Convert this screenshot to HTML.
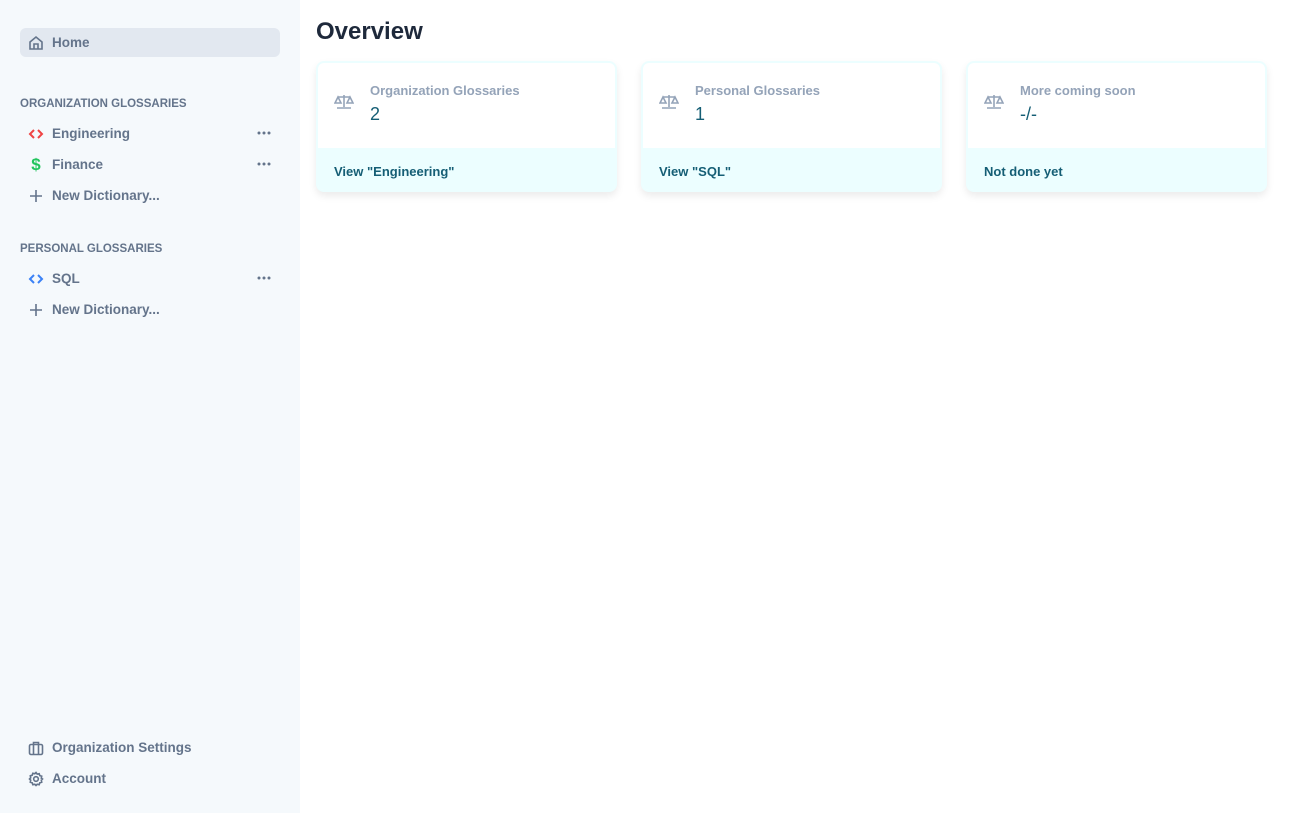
<!DOCTYPE html>
<html><head><meta charset="utf-8"><style>
*{box-sizing:border-box;margin:0;padding:0}
body{width:1312px;height:813px;font-family:"Liberation Sans",sans-serif;background:#fff;position:relative;overflow:hidden}
.side{position:absolute;left:0;top:0;width:300px;height:813px;background:#f5f9fc}
.item{position:absolute;left:20px;width:260px;height:29px;display:flex;align-items:center;padding-left:8px;font-size:13.5px;color:#64748b;font-weight:bold}
.item svg{width:16px;height:16px;margin-right:8px}
.home{background:#e2e8f0;border-radius:6px}
.sec{position:absolute;left:20px;font-size:11.5px;font-weight:bold;color:#64748b}
.item svg.dots{position:absolute;right:9px;top:12px;width:14px;height:4px;margin:0}
h1{position:absolute;left:316px;top:18px;font-size:24px;color:#1e293b;font-weight:bold}
.card{position:absolute;top:61px;width:301px;height:131px;border:2px solid #ecfeff;border-radius:8px;background:#fff;box-shadow:0 4px 8px rgba(0,0,0,.08);overflow:hidden}
.card .ic{position:absolute;left:16px;top:31px}
.card .t{position:absolute;left:52px;top:20px;font-size:13px;color:#94a3b8;font-weight:bold}
.card .v{position:absolute;left:52px;top:41px;font-size:18px;color:#155e75}
.card .f{position:absolute;left:0;right:0;bottom:0;height:42px;background:#ecfeff;font-size:13px;color:#155e75;font-weight:bold;padding:16px 0 0 16px}
</style></head><body>
<div class="side">
<div class="item home" style="top:28px"><svg viewBox="0 0 16 16" fill="none" stroke="#64748b" stroke-width="1.6"><path d="M2 7L8 2l6 5v7H2z M6 14V9h4v5"/></svg>Home</div>
<div class="sec" style="top:98px">ORGANIZATION GLOSSARIES</div>
<div class="item" style="top:119px"><svg viewBox="0 0 16 16" fill="none" stroke="#ef4444" stroke-width="2"><path d="M6 4L2 8l4 4M10 4l4 4-4 4"/></svg>Engineering<svg class="dots" viewBox="0 0 14 4" fill="#64748b"><circle cx="2" cy="2" r="1.5"/><circle cx="7" cy="2" r="1.5"/><circle cx="12" cy="2" r="1.5"/></svg></div>
<div class="item" style="top:150px"><span style="width:16px;margin-right:8px;color:#22c55e;font-size:17px;text-align:center">$</span>Finance<svg class="dots" viewBox="0 0 14 4" fill="#64748b"><circle cx="2" cy="2" r="1.5"/><circle cx="7" cy="2" r="1.5"/><circle cx="12" cy="2" r="1.5"/></svg></div>
<div class="item" style="top:181px"><svg viewBox="0 0 16 16" fill="none" stroke="#64748b" stroke-width="1.6"><path d="M8 2v12M2 8h12"/></svg>New Dictionary...</div>
<div class="sec" style="top:243px">PERSONAL GLOSSARIES</div>
<div class="item" style="top:264px"><svg viewBox="0 0 16 16" fill="none" stroke="#3b82f6" stroke-width="2"><path d="M6 4L2 8l4 4M10 4l4 4-4 4"/></svg>SQL<svg class="dots" viewBox="0 0 14 4" fill="#64748b"><circle cx="2" cy="2" r="1.5"/><circle cx="7" cy="2" r="1.5"/><circle cx="12" cy="2" r="1.5"/></svg></div>
<div class="item" style="top:295px"><svg viewBox="0 0 16 16" fill="none" stroke="#64748b" stroke-width="1.6"><path d="M8 2v12M2 8h12"/></svg>New Dictionary...</div>
<div class="item" style="top:733px"><svg viewBox="0 0 16 16" fill="none" stroke="#64748b" stroke-width="1.6"><rect x="1.5" y="4.5" width="13" height="10" rx="1.5"/><path d="M5.5 4.5V2.5h5v2M5.5 4.5v10M10.5 4.5v10"/></svg>Organization Settings</div>
<div class="item" style="top:764px"><svg viewBox="0 0 16 16" fill="none" stroke="#64748b" stroke-width="1.6"><circle cx="8" cy="8" r="2.3"/><path d="M8 1.5l1.2 1.6 2-.4.6 1.9 1.9.6-.4 2L14.5 8l-1.2 1.2.4 2-1.9.6-.6 1.9-2-.4L8 14.5l-1.2-1.2-2 .4-.6-1.9-1.9-.6.4-2L1.5 8l1.2-1.2-.4-2 1.9-.6.6-1.9 2 .4z"/></svg>Account</div>
</div>
<h1>Overview</h1>
<div class="card" style="left:316px"><svg class="ic" width="20" height="16" viewBox="0 0 20 16" fill="none" stroke="#94a3b8" stroke-width="1.6"><path d="M10 1v12M4 3h12M3 14h14M4 3l-3 6h6zM16 3l-3 6h6z"/></svg><div class="t">Organization Glossaries</div><div class="v">2</div><div class="f">View "Engineering"</div></div>
<div class="card" style="left:641px"><svg class="ic" width="20" height="16" viewBox="0 0 20 16" fill="none" stroke="#94a3b8" stroke-width="1.6"><path d="M10 1v12M4 3h12M3 14h14M4 3l-3 6h6zM16 3l-3 6h6z"/></svg><div class="t">Personal Glossaries</div><div class="v">1</div><div class="f">View "SQL"</div></div>
<div class="card" style="left:966px"><svg class="ic" width="20" height="16" viewBox="0 0 20 16" fill="none" stroke="#94a3b8" stroke-width="1.6"><path d="M10 1v12M4 3h12M3 14h14M4 3l-3 6h6zM16 3l-3 6h6z"/></svg><div class="t">More coming soon</div><div class="v">-/-</div><div class="f">Not done yet</div></div>
</body></html>
